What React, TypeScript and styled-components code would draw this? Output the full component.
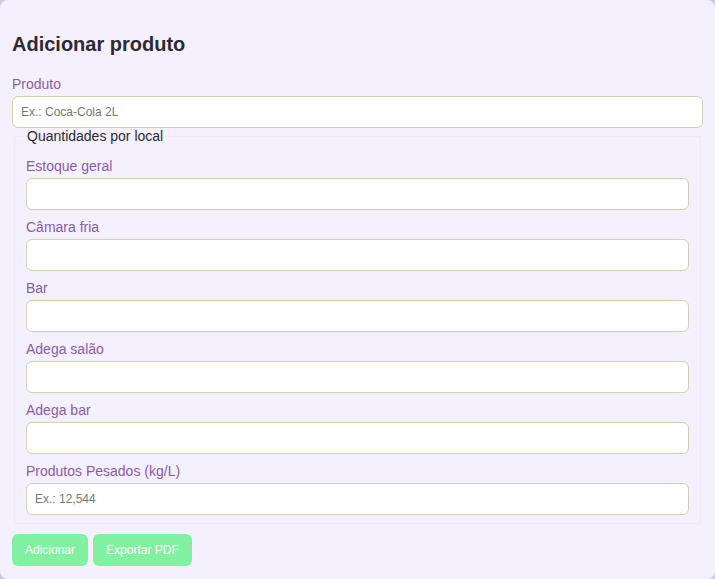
import styled, { createGlobalStyle } from "styled-components";

const GlobalStyle = createGlobalStyle`
  html, body, #root {
    margin: 0;
    padding: 0;
    width: 100%;
    height: 100%;
  }
  body {
    background: #cbc6ef;
    font-family: "Liberation Sans", Arial, sans-serif;
  }
  * {
    box-sizing: border-box;
  }
`;

const Card = styled.form`
  width: 715px;
  height: 579px;
  padding: 12px;
  background: #f5f0fe;
  border-radius: 8px;
  overflow: hidden;
`;

const Title = styled.h2`
  margin: 21px 0 19px;
  font-size: 20px;
  line-height: 23px;
  font-weight: bold;
  color: #2c2a33;
`;

const Field = styled.div<{ $gap?: number }>`
  display: flex;
  flex-direction: column;
  gap: 4px;
  margin-bottom: ${(p) => p.$gap ?? 0}px;
`;

const Label = styled.label`
  padding-top: 1px;
  font-size: 14px;
  line-height: 16px;
  color: #8a5ca6;
`;

const Input = styled.input`
  height: 32px;
  width: 100%;
  padding: 0 8px;
  border: 1px solid #cdd3ae;
  border-radius: 6px;
  background: #fff;
  font-family: "Liberation Sans", Arial, sans-serif;
  font-size: 12px;
  color: #333;
  outline: none;

  &::placeholder {
    color: #777;
  }
`;

const Group = styled.fieldset`
  margin: 0 2px;
  padding: 0 11px;
  border: 1px solid #efeaf5;
  display: flex;
  flex-direction: column;
`;

const Legend = styled.legend`
  padding: 0 1px;
  margin-bottom: 13px;
  font-size: 14px;
  line-height: 16px;
  color: #2c2a33;
`;

const Actions = styled.div`
  display: flex;
  gap: 5px;
  margin-top: 10px;
`;

const Button = styled.button`
  height: 32px;
  padding: 0 13px;
  border: none;
  border-radius: 6px;
  background: #80f1a1;
  color: #fff;
  font-family: "Liberation Sans", Arial, sans-serif;
  font-size: 12px;
  cursor: pointer;
`;

const LOCAIS = [
  { label: "Estoque geral" },
  { label: "Câmara fria" },
  { label: "Bar" },
  { label: "Adega salão" },
  { label: "Adega bar" },
  { label: "Produtos Pesados (kg/L)", placeholder: "Ex.: 12,544" },
];

export default function App() {
  return (
    <>
      <GlobalStyle />
      <Card onSubmit={(e) => e.preventDefault()}>
        <Title>Adicionar produto</Title>
        <Field>
          <Label>Produto</Label>
          <Input placeholder="Ex.: Coca-Cola 2L" />
        </Field>
        <Group>
          <Legend>Quantidades por local</Legend>
          {LOCAIS.map((local) => (
            <Field key={local.label} $gap={8}>
              <Label>{local.label}</Label>
              <Input placeholder={local.placeholder} />
            </Field>
          ))}
        </Group>
        <Actions>
          <Button type="submit">Adicionar</Button>
          <Button type="button">Exportar PDF</Button>
        </Actions>
      </Card>
    </>
  );
}
